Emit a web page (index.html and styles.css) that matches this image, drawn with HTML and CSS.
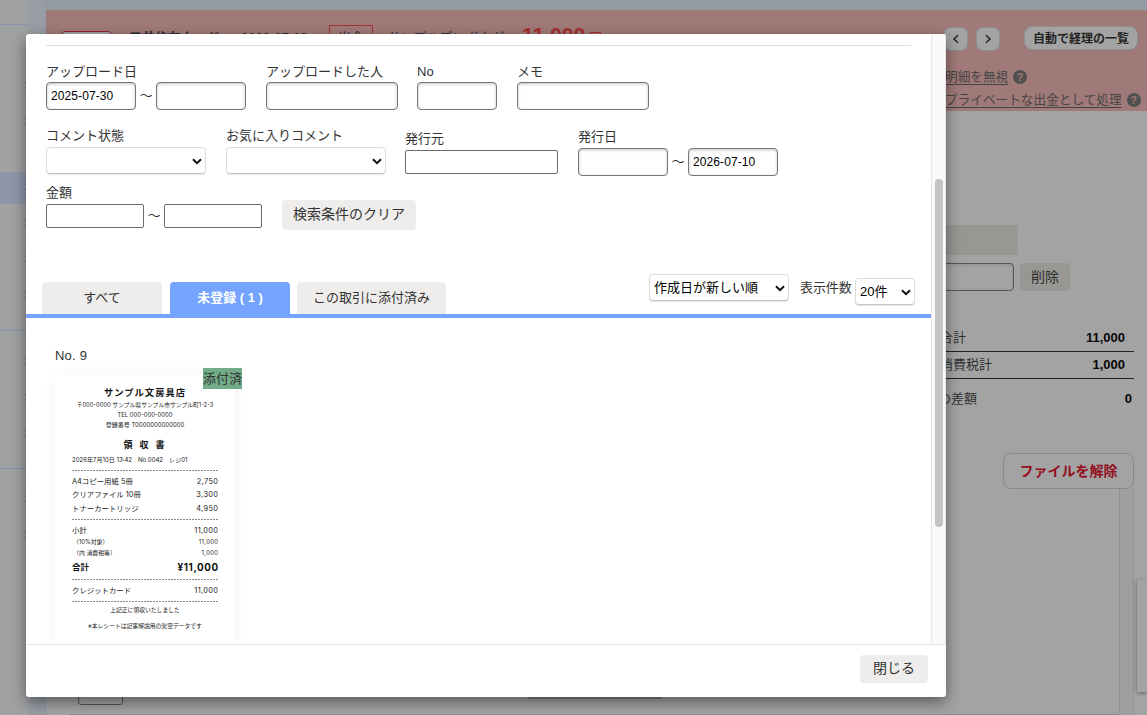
FILE: index.html
```html
<!DOCTYPE html>
<html lang="ja">
<head>
<meta charset="utf-8">
<title>ファイルの選択</title>
<link rel="stylesheet" href="styles.css">
</head>
<body>
<div class="app">
  <nav class="sidebar">
    <div class="side-group side-top"></div>
    <div class="side-group side-first"><i></i><i></i></div>
    <div class="side-group side-second"><i class="current"></i><i></i><i></i><i></i></div>
    <div class="side-group side-third"><i></i><i></i><i></i></div>
    <div class="side-group side-last"><i></i><i></i></div>
  </nav>
  <main class="main">
    <header class="deal">
      <div class="deal-row">
        <span class="status"></span>
        <b class="account">三井住友カード</b>
        <b class="deal-date">2026-07-10</b>
        <span class="kind">出金</span>
        <span class="partner">サンプルブンボウグ</span>
        <span class="deal-amount"><b>11,000</b> 円</span>
        <div class="deal-nav">
          <button class="pager"><svg width="8" height="10" viewBox="0 0 8 10"><path d="M6 1.2 2 5l4 3.8"/></svg></button>
          <button class="pager"><svg width="8" height="10" viewBox="0 0 8 10"><path d="M2 1.2 6 5 2 8.8"/></svg></button>
          <button class="list-button">自動で経理の一覧</button>
        </div>
      </div>
      <div class="deal-links">
        <div><a>明細を無視</a><span class="help">?</span></div>
        <div><a>プライベートな出金として処理</a><span class="help">?</span></div>
      </div>
    </header>
    <section class="detail">
      <div class="gray-box"></div>
      <div class="edit-row"><span class="edit-input"></span><button class="delete">削除</button></div>
      <div class="total-row"><span>合計</span><b>11,000</b></div>
      <div class="total-row tax"><span>消費税計</span><b>1,000</b></div>
      <div class="diff-row"><span>の差額</span><b>0</b></div>
      <button class="release">ファイルを解除</button>
      <div class="file-panel"><div class="file-track"></div></div>
    </section>
    <span class="under-box"></span>
    <span class="under-shadow"></span>
    <span class="side-card"></span>
  </main>
</div>

<div class="modal">
  <div class="modal-body">
    <div class="content">
      <div class="rule"></div>
      <div class="row row-one">
        <div class="field"><label>アップロード日</label><div class="range"><span class="input w90">2025-07-30</span><span class="tilde">〜</span><span class="input w90"></span></div></div>
        <div class="field"><label>アップロードした人</label><span class="input w132"></span></div>
        <div class="field no"><label>No</label><span class="input w80"></span></div>
        <div class="field"><label>メモ</label><span class="input w132"></span></div>
      </div>
      <div class="row row-two">
        <div class="field"><label>コメント状態</label><span class="select w160"><svg class="arrow" viewBox="0 0 10 7"><path d="M1 1.2 5 5.2 9 1.2"/></svg></span></div>
        <div class="field"><label>お気に入りコメント</label><span class="select w160"><svg class="arrow" viewBox="0 0 10 7"><path d="M1 1.2 5 5.2 9 1.2"/></svg></span></div>
        <div class="field issuer"><label>発行元</label><span class="input plain w153"></span></div>
        <div class="field issued"><label>発行日</label><div class="range"><span class="input w90"></span><span class="tilde">〜</span><span class="input w90">2026-07-10</span></div></div>
      </div>
      <div class="row row-three">
        <div class="field"><label>金額</label><div class="range"><span class="input plain w98"></span><span class="tilde">〜</span><span class="input plain w98"></span></div></div>
        <button class="button clear">検索条件のクリア</button>
      </div>
      <div class="tabs">
        <div class="tab">すべて</div>
        <div class="tab active">未登録 ( 1 )</div>
        <div class="tab attached">この取引に添付済み</div>
        <div class="sorting">
          <span class="select w140">作成日が新しい順<svg class="arrow" viewBox="0 0 10 7"><path d="M1 1.2 5 5.2 9 1.2"/></svg></span>
          <span class="count-label">表示件数</span>
          <span class="select w60">20件<svg class="arrow" viewBox="0 0 10 7"><path d="M1 1.2 5 5.2 9 1.2"/></svg></span>
        </div>
      </div>
      <div class="file-no">No. 9</div>
      <div class="receipt">
        <span class="badge">添付済</span>
        <div class="shop">サンプル文房具店</div>
        <div class="address">〒000-0000 サンプル県サンプル市サンプル町1-2-3</div>
        <div class="address tel">TEL 000-000-0000</div>
        <div class="address reg">登録番号 T0000000000000</div>
        <div class="heading">領収書</div>
        <div class="issued-at">2026年7月10日 13:42　No.0042　レジ01</div>
        <div class="dash"></div>
        <div class="line"><span>A4コピー用紙 5冊</span><span class="sum">2,750</span></div>
        <div class="line"><span>クリアファイル 10冊</span><span class="sum">3,300</span></div>
        <div class="line"><span>トナーカートリッジ</span><span class="sum">4,950</span></div>
        <div class="dash dash-items"></div>
        <div class="line subtotal"><span>小計</span><span class="sum">11,000</span></div>
        <div class="line small"><span>（10%対象）</span><span class="sum">11,000</span></div>
        <div class="line small"><span>（内 消費税等）</span><span class="sum">1,000</span></div>
        <div class="line grand"><span>合計</span><span class="sum grand-sum">¥11,000</span></div>
        <div class="dash"></div>
        <div class="line card"><span>クレジットカード</span><span class="sum">11,000</span></div>
        <div class="dash"></div>
        <div class="note">上記正に領収いたしました</div>
        <div class="note last">※本レシートは記事解説用の架空データです</div>
      </div>
    </div>
    <div class="scrollbar"><div class="thumb"></div></div>
  </div>
  <footer class="modal-footer"><button class="button close">閉じる</button></footer>
</div>
</body>
</html>
```
FILE: styles.css
```css
* { box-sizing: border-box; }
body {
  margin: 0;
  width: 1147px;
  height: 715px;
  overflow: hidden;
  background: #a3a3a3;
  color: #333;
  font: 13px/20px "Liberation Sans", "Noto Sans CJK JP", sans-serif;
}
button { border: 0; margin: 0; padding: 0; font-family: inherit; color: inherit; white-space: nowrap; }

/* Dimmed page behind the dialog */
.app { display: flex; height: 715px; color: #2f2f2f; }
.sidebar { width: 46px; flex: none; background: linear-gradient(90deg, #a0a1a3 0 28px, #989da4 29px); border-right: 1px solid #8e98ae; }
.side-group { display: flex; flex-direction: column; gap: 4px; border-bottom: 1px solid #8793b0; }
.side-group i { height: 32px; display: block; background: radial-gradient(circle at 26px 12px, #5b606d 0 .5px, transparent 1px), radial-gradient(circle at 26px 18px, #5b606d 0 .5px, transparent 1px); }
.side-group i.current { background-color: #8e97a9; }
.side-top { width: 28px; height: 25px; }
.side-first { padding-top: 45px; border: 0; }
.side-second { padding: 34px 0 18px; }
.side-third { padding: 15px 0 18px; }
.side-last { padding-top: 15px; border: 0; }
.main { position: relative; flex: 1; min-width: 0; background: #a3a3a3; border-top: 10px solid #959ba3; }
.deal { height: 101px; background: #a07a78; padding: 15px 10px 0 15px; }
.deal-row { display: flex; height: 40px; align-items: flex-start; white-space: nowrap; }
.status { width: 51px; height: 24px; margin: 6px 17px 0 0; border: 1px solid #98202c; border-radius: 4px; background: #a3a3a3; }
.account { width: 96px; margin-top: 3px; }
.deal-date { width: 86px; margin: 3px 0 0 16px; font-size: 13px; }
.kind { width: 44px; height: 26px; margin-left: 2px; line-height: 24px; text-align: center; border: 1px solid #a33232; }
.partner { width: 134px; margin: 3px 0 0 15px; }
.deal-amount { display: flex; align-items: baseline; gap: 4px; color: #a52f2f; }
.deal-amount b { font-size: 21px; }
.deal-nav { display: flex; align-items: flex-start; margin: 0 -1px 0 auto; }
.pager { width: 24px; height: 24px; margin: 2px 8px 0 0; border: 1px solid #8d8f91; border-radius: 7px; background: #a3a3a3; display: grid; place-items: center; }
.pager svg { fill: none; stroke: #222; stroke-width: 1.5; }
.list-button { width: 114px; height: 24px; margin: 1px 0 0 16px; padding-bottom: 2px; border: 1px solid #8d8f91; border-radius: 8px; background: #a3a3a3; color: #222; font-size: 12px; font-weight: bold; }
.deal-links { width: 202px; margin: 1px -10px 0 auto; font-size: 12.65px; line-height: 23px; color: #454545; }
.deal-links div { display: flex; align-items: center; gap: 5px; white-space: nowrap; }
.deal-links a { text-decoration: underline; text-underline-offset: 3px; }
.help { width: 14px; height: 14px; margin-top: -2px; border-radius: 50%; background: #505050; color: #a07a78; font-size: 11px; line-height: 14px; font-weight: bold; text-align: center; }
.detail { display: flex; flex-direction: column; padding: 114px 13px 0 834px; }
.gray-box { width: 138px; height: 30px; background: #989794; }
.edit-row { display: flex; gap: 6px; margin-top: 8px; }
.edit-input { width: 134px; height: 28px; border: 1px solid #555; border-radius: 4px; box-shadow: inset 0 1px 3px #8888; }
.delete { width: 50px; height: 28px; padding-bottom: 2px; background: #989794; border-radius: 4px; font-size: 14px; }
.total-row, .diff-row { display: flex; justify-content: space-between; }
.total-row { margin-top: 33px; height: 28px; line-height: 27px; padding: 0 9px 0 60px; border-bottom: 1px solid #222; }
.total-row b, .diff-row b { color: #080808; }
.total-row.tax { margin-top: 0; height: 27px; line-height: 25px; }
.diff-row { height: 38px; line-height: 39px; padding: 0 2px 0 58px; }
.release { width: 131px; height: 36px; margin: 36px 0 0 auto; padding-bottom: 2px; border: 1px solid #898989; border-radius: 8px; background: transparent; color: #94101e; font-size: 14px; font-weight: bold; }
.file-panel { height: 226px; margin-left: -810px; border-bottom: 1px solid #898989; display: flex; justify-content: flex-end; }
.file-track { width: 15px; height: 226px; background: #9e9e9e; border: solid #929292; border-width: 0 1px; }
.under-box { position: absolute; left: 32px; top: 670px; width: 45px; height: 25px; border: 1px solid #555; border-radius: 3px; }
.under-shadow { position: absolute; left: 481px; top: 684px; width: 136px; height: 5px; border-radius: 3px; background: #7d7d7d; }
.side-card { position: absolute; right: 0; top: 570px; width: 10px; height: 112px; background: #a3a3a3; box-shadow: 0 1px 4px #666; clip-path: inset(-6px 0 -6px -6px); }

/* Dialog */
.modal { position: absolute; left: 26px; top: 34px; width: 920px; height: 663px; background: #fff; border-radius: 3px; overflow: hidden; box-shadow: 0 5px 15px rgba(0,0,0,.45); }
.modal-body { display: flex; height: 610px; overflow: hidden; }
.content { width: 905px; }
.rule { height: 1px; margin: 11px 20px 15px; background: #ddd; }
.scrollbar { width: 15px; background: #fafafa; border: solid #e7e7e7; border-width: 0 1px; padding: 145px 0 0 3px; }
.thumb { width: 8px; height: 348px; border-radius: 4px; background: #c4c4c4; }
.row { display: flex; align-items: flex-start; padding-left: 20px; gap: 20px; }
.row-one { height: 65px; }
.row-two { height: 57px; }
.row-three { height: 44px; }
.field { display: flex; flex-direction: column; gap: 1px; }
.field label { height: 20px; line-height: 20.5px; white-space: nowrap; }
.row-one .field label { line-height: 21px; }
.field.no { margin: 0 0 0 -1px; }
.issuer { margin: 3px 0 0 -1px; }
.issued { margin-top: 1px; }
.row-two .issuer label, .row-two .issued label { line-height: 19px; }
.range { display: flex; }
.tilde { width: 20px; text-align: center; line-height: 28px; }
.input { display: block; height: 28px; border: 1px solid #777; border-radius: 4px; padding-left: 4px; line-height: 26px; color: #000; background: #fff; box-shadow: inset 0 1px 3px rgba(0,0,0,.25); font-size: 12px; letter-spacing: .1px; white-space: nowrap; }
.input.plain { height: 24px; border-radius: 2px; box-shadow: none; border-color: #6b6b6b; }
.w60 { width: 60px; } .w80 { width: 80px; } .w90 { width: 90px; } .w98 { width: 98px; }
.w132 { width: 132px; } .w140 { width: 140px; } .w153 { width: 153px; } .w160 { width: 160px; }
.select { display: flex; align-items: center; justify-content: space-between; height: 27px; padding: 0 3px 0 4px; border: 1px solid #ddd; border-bottom-color: #c5c5c5; border-radius: 4px; background: #fff; color: #000; box-shadow: 0 1px 1px rgba(0,0,0,.1); white-space: nowrap; }
.arrow { width: 10px; height: 7px; margin: 2px 0 0 auto; fill: none; stroke: #111; stroke-width: 2; }
.row-three .tilde { line-height: 24px; }
.button { background: #eeedec; border-radius: 4px; padding-bottom: 4px; font-size: 14px; color: #333; }
.clear { width: 134px; height: 30px; margin-top: 17px; }
.tabs { display: flex; align-items: flex-end; margin-top: 46px; height: 45px; padding-left: 16px; gap: 8px; border-bottom: 4px solid #74a4ff; }
.tab { width: 120px; height: 32px; line-height: 31px; text-align: center; background: #eeedec; border-radius: 4px 4px 0 0; white-space: nowrap; }
.tab.active { background: #74a4ff; color: #fff; font-weight: bold; }
.tab.attached { width: 149px; margin-left: -1px; }
.sorting { display: flex; align-items: flex-start; height: 40px; margin-left: auto; padding-right: 16px; white-space: nowrap; }
.count-label { margin: 4px 4px 0 11px; width: 51px; letter-spacing: -.1px; }
.sorting .w60 { margin-top: 4px; }
.file-no { margin: 28px 0 0 29px; height: 20px; letter-spacing: .2px; }
.receipt { position: relative; width: 180px; height: 290px; margin: 9px 0 0 29px; padding: 9px 17px 0; background: #fff; box-shadow: 0 0 12px rgba(0,0,0,.05); color: #222; font-family: Inter, "Noto Sans CJK JP", sans-serif; white-space: nowrap; }
.badge { position: absolute; left: 148px; top: -7px; width: 39px; height: 21px; background: #72ab88; color: #333; line-height: 20px; }
.shop { height: 16px; line-height: 17px; font-size: 9.3px; letter-spacing: 1px; font-weight: bold; text-align: center; color: #111; }
.address { display: flex; justify-content: center; height: 10px; line-height: 10px; font-size: 5.8px; }
.tel, .reg { height: 9.5px; line-height: 9px; font-size: 6px; }
.reg { font-size: 6px; }
.tel { line-height: 9.5px; font-size: 5.9px; }
.heading { height: 16px; margin-top: 7px; line-height: 17px; text-align: center; font-size: 9px; letter-spacing: 7px; text-indent: 5px; font-weight: bold; color: #111; }
.issued-at { height: 10px; margin: 3px 0 4.5px; line-height: 10px; font-size: 6.05px; }
.dash { height: 1px; background: repeating-linear-gradient(90deg, #888 0 2px, transparent 2px 3px); }
.issued-at + .dash { margin-bottom: 4px; }
.line { display: flex; justify-content: space-between; height: 13.5px; line-height: 13.5px; font-size: 7.4px; }
.sum { letter-spacing: .35px; margin-right: -.35px; }
.dash-items { margin: 4px 0; }
.subtotal { height: 13px; line-height: 13px; }
.small { height: 10.5px; line-height: 10.5px; padding-left: 1px; font-size: 5.9px; }
.grand { height: 15px; margin: 1.5px 0 4px; line-height: 15px; font-size: 8.5px; font-weight: bold; color: #111; }
.grand-sum { font-size: 9.8px; letter-spacing: .6px; margin-right: -.6px; }
.card { height: 13px; line-height: 13px; margin: 4px 0 4.5px; }
.note { height: 10px; margin-top: 2.5px; line-height: 10px; font-size: 5.8px; text-align: center; }
.note.last { margin-top: 6px; }
.modal-footer { display: flex; justify-content: flex-end; height: 53px; padding: 10px 18px 0 0; border-top: 1px solid #eaeaea; }
.close { width: 68px; height: 28px; }
```
